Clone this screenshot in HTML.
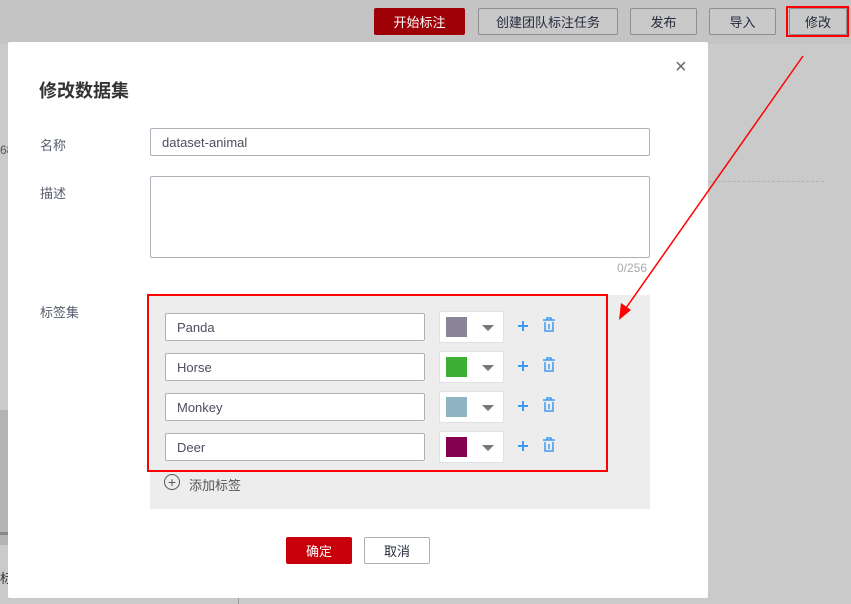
<!DOCTYPE html>
<html><head><meta charset="utf-8"><style>
*{box-sizing:border-box;margin:0;padding:0}
body{width:851px;height:604px;position:relative;overflow:hidden;background:#cacaca;font-family:"Liberation Sans","Noto Sans CJK SC",sans-serif;font-size:13px;color:#333}
.abs{position:absolute}
.topbar{left:0;top:0;width:851px;height:44px;background:#c4c4c5}
.btn{position:absolute;top:8px;height:27px;border:1px solid #8e8e90;background:#c9c9ca;color:#252b3a;font-size:13px;display:flex;align-items:center;justify-content:center;border-radius:2px}
.modal{left:8px;top:42px;width:700px;height:556px;background:#fff;border-radius:2px}
.lbl{color:#575d6c;font-size:13px}
.inp{position:absolute;border:1px solid #adb0b8;background:#fff;border-radius:2px;font-size:13px;color:#4a4f5c;padding-left:11px;display:flex;align-items:center}
.sel{position:absolute;width:65px;height:32px;border:1px solid #dfe1e6;background:#fff;border-radius:2px}
.sw{position:absolute;left:6px;top:5px;width:21px;height:20px}
.tri{position:absolute;left:42px;top:13px;width:0;height:0;border-left:6px solid transparent;border-right:6px solid transparent;border-top:6px solid #777}
</style></head><body>
<div class="abs topbar"></div>
<div class="btn" style="left:374px;width:91px;background:#9e0008;border-color:#9e0008;color:#fff">开始标注</div>
<div class="btn" style="left:478px;width:140px">创建团队标注任务</div>
<div class="btn" style="left:630px;width:67px">发布</div>
<div class="btn" style="left:709px;width:67px">导入</div>
<div class="btn" style="left:789px;width:58px;top:8px">修改</div>
<div class="abs" style="left:786px;top:6px;width:63px;height:31px;border:2px solid #f00"></div>
<div class="abs" style="left:0;top:143px;width:8px;font-size:12px;color:#555;overflow:hidden">68</div>
<div class="abs" style="left:708px;top:181px;width:116px;border-top:1px dashed #b3b3b3"></div>
<div class="abs" style="left:0;top:410px;width:8px;height:135px;background:#b4b4b4"></div>
<div class="abs" style="left:0;top:532px;width:8px;height:3px;background:#888"></div>
<div class="abs" style="left:0;top:568px;width:8px;font-size:13px;overflow:hidden;color:#333">标</div>
<div class="abs" style="left:238px;top:590px;width:1px;height:14px;background:#999"></div>
<div class="abs modal">
  <div class="abs" style="left:31px;top:35px;font-size:18px;font-weight:bold;color:#333">修改数据集</div>
  <div class="abs" style="left:667px;top:14px;font-size:20px;color:#666">×</div>
  <div class="abs lbl" style="left:32px;top:93px">名称</div>
  <div class="inp" style="left:142px;top:86px;width:500px;height:28px">dataset-animal</div>
  <div class="abs lbl" style="left:32px;top:141px">描述</div>
  <div class="inp" style="left:142px;top:134px;width:500px;height:82px"></div>
  <div class="abs" style="left:609px;top:219px;font-size:12px;color:#aaa">0/256</div>
  <div class="abs lbl" style="left:32px;top:260px">标签集</div>
  <div class="abs" style="left:142px;top:253px;width:500px;height:214px;background:#ededed"></div>
  <div class="abs" style="left:139px;top:252px;width:461px;height:178px;border:2px solid #f00"></div>
  <div class="abs" style="left:156px;top:432px;width:16px;height:16px;border:1.5px solid #555;border-radius:50%;display:flex;align-items:center;justify-content:center;font-size:14px;line-height:1;color:#555">+</div>
  <div class="abs" style="left:181px;top:433px;color:#555;font-size:13px">添加标签</div>
  <div class="abs" style="left:278px;top:495px;width:66px;height:27px;background:#c7000b;color:#fff;border-radius:2px;display:flex;align-items:center;justify-content:center">确定</div>
  <div class="abs" style="left:356px;top:495px;width:66px;height:27px;border:1px solid #adb0b8;color:#252b3a;border-radius:2px;display:flex;align-items:center;justify-content:center">取消</div>
</div>
<div class="inp" style="left:165px;top:313px;width:260px;height:28px">Panda</div>
<div class="sel" style="left:439px;top:311px"><div class="sw" style="background:#8b8497"></div><div class="tri"></div></div>
<div class="inp" style="left:165px;top:353px;width:260px;height:28px">Horse</div>
<div class="sel" style="left:439px;top:351px"><div class="sw" style="background:#3cb034"></div><div class="tri"></div></div>
<div class="inp" style="left:165px;top:393px;width:260px;height:28px">Monkey</div>
<div class="sel" style="left:439px;top:391px"><div class="sw" style="background:#8fb5c4"></div><div class="tri"></div></div>
<div class="inp" style="left:165px;top:433px;width:260px;height:28px">Deer</div>
<div class="sel" style="left:439px;top:431px"><div class="sw" style="background:#850051"></div><div class="tri"></div></div>
<svg class="abs" style="left:0;top:0" width="851" height="604">
  <g stroke="#3c9cf0" stroke-width="2" fill="none">
    <g id="ic"><path d="M518 326h10M523 321v10"/><path d="M543 320h12M547 320v-2h4v2M545 322v9h8v-9M549 324v5" stroke-width="1.5"/></g>
    <use href="#ic" y="40"/><use href="#ic" y="80"/><use href="#ic" y="120"/>
  </g>
  <line x1="803" y1="56" x2="626" y2="308" stroke="#f00" stroke-width="1.5"/>
  <polygon points="619,320 621,303 631,310" fill="#f00"/>
</svg>
</body></html>
